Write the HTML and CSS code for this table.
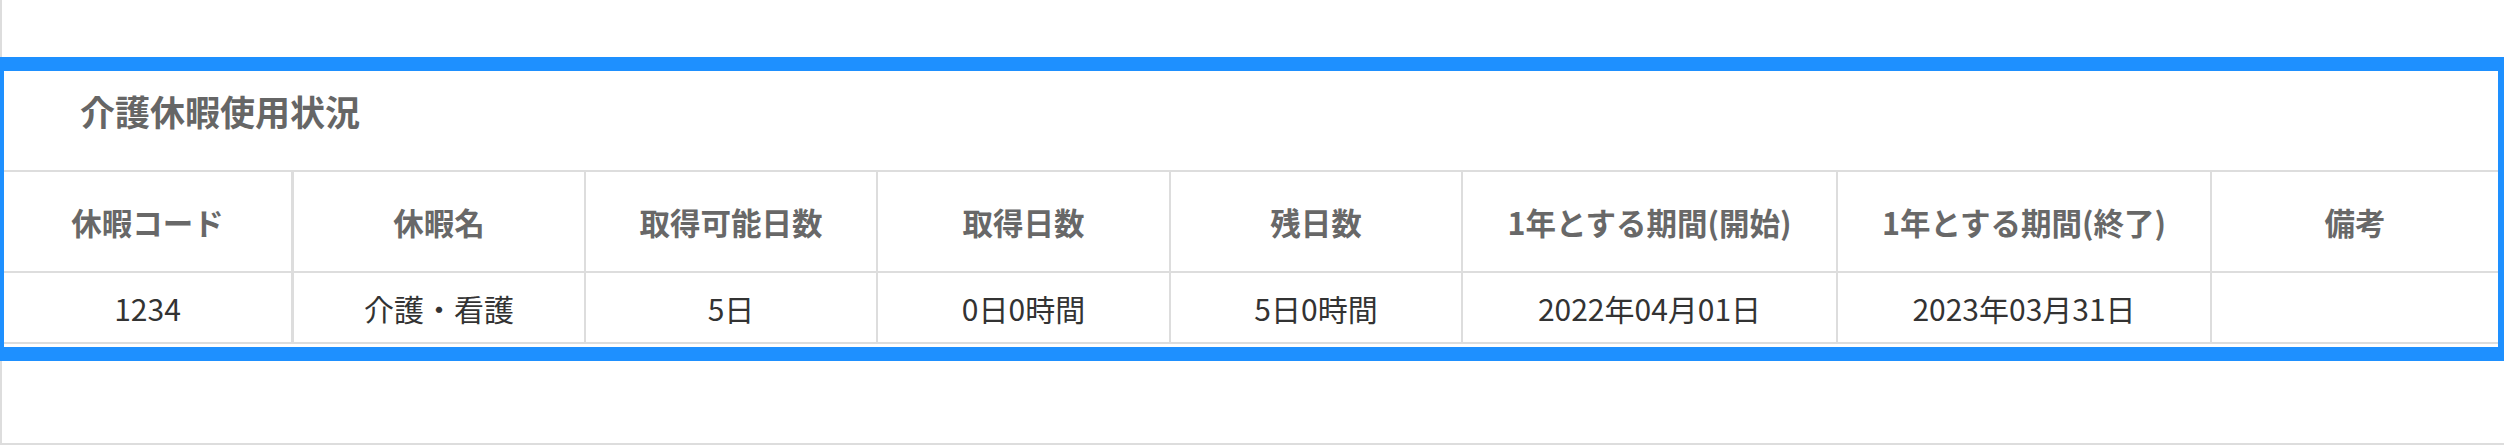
FILE: index.html
```html
<!DOCTYPE html>
<html lang="ja">
<head>
<meta charset="utf-8">
<title>介護休暇使用状況</title>
<link rel="stylesheet" href="styles.css">
</head>
<body>
<div class="page">
  <section class="panel">
    <h2 class="title">介護休暇使用状況</h2>
    <div class="tbl" role="table">
      <div class="th first">休暇コード</div>
      <div class="th">休暇名</div>
      <div class="th">取得可能日数</div>
      <div class="th">取得日数</div>
      <div class="th">残日数</div>
      <div class="th">1年とする期間(開始)</div>
      <div class="th">1年とする期間(終了)</div>
      <div class="th last">備考</div>
      <div class="td first">1234</div>
      <div class="td">介護・看護</div>
      <div class="td">5日</div>
      <div class="td">0日0時間</div>
      <div class="td">5日0時間</div>
      <div class="td">2022年04月01日</div>
      <div class="td">2023年03月31日</div>
      <div class="td last"></div>
    </div>
  </section>
</div>
</body>
</html>
```
FILE: styles.css
```css
html, body {
  margin: 0;
  padding: 0;
  background: #ffffff;
}
body {
  font-family: "Noto Sans CJK JP", "Noto Sans", sans-serif;
}
.page {
  box-sizing: border-box;
  height: 445px;
  padding-top: 57px;
  border-left: 2px solid #dddddd;
  border-bottom: 2px solid #dddddd;
}
.panel {
  margin-left: -2px;
  border-style: solid;
  border-color: #1e90ff;
  border-width: 14px 6px 14px 4px;
  padding-bottom: 3px;
  background: #ffffff;
}
.title {
  margin: 0;
  height: 99px;
  box-sizing: border-box;
  padding: 15px 0 0 76px;
  font-size: 35px;
  line-height: 50px;
  font-weight: 700;
  color: #666666;
}
.tbl {
  display: grid;
  grid-template-columns: 290px 292px 292px 293px 292px 375px 374px 1fr;
  border-top: 2px solid #dddddd;
  border-bottom: 2px solid #dddddd;
}
.th, .td {
  display: flex;
  align-items: center;
  justify-content: center;
  border-right: 2px solid #dddddd;
  white-space: nowrap;
}
.th {
  height: 99px;
  border-bottom: 2px solid #dddddd;
  font-size: 30.5px;
  font-weight: 700;
  color: #686868;
}
.td {
  height: 69px;
  font-size: 30px;
  font-weight: 400;
  color: #333333;
}
.first {
  border-right-width: 3px;
}
.last {
  border-right: none;
}
```
